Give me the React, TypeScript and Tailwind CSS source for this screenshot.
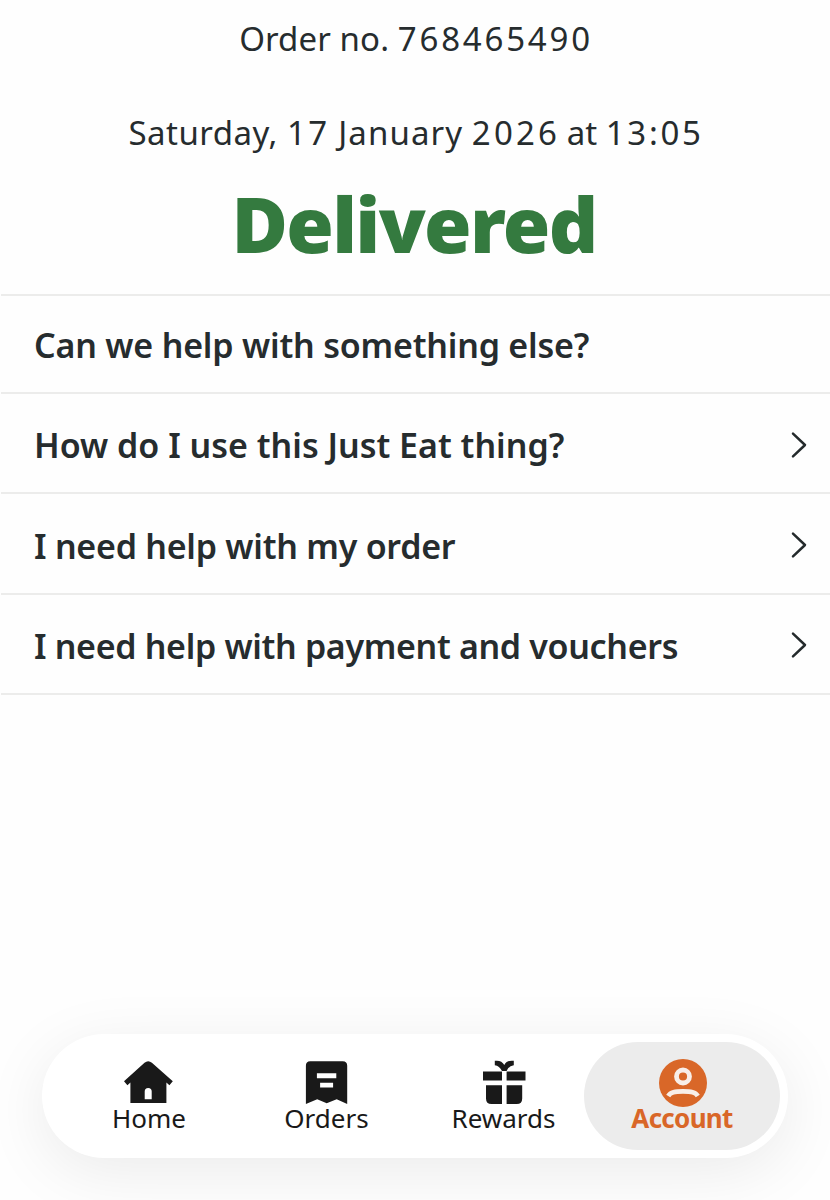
import type { ReactNode } from "react";

const helpTopics = [
  { title: "How do I use this Just Eat thing?", className: "" },
  { title: "I need help with my order", className: "tracking-[-0.25px]" },
  { title: "I need help with payment and vouchers", className: "tracking-[-0.33px]" },
];

function ChevronIcon() {
  return (
    <svg width="18" height="28" viewBox="0 0 18 28" fill="none">
      <path
        d="M3 2.7L15 14L3 25.3"
        stroke="#242a2c"
        strokeWidth="2.5"
        strokeLinecap="round"
        strokeLinejoin="round"
      />
    </svg>
  );
}

function HomeIcon() {
  return (
    <svg width="52" height="48" viewBox="0.8 0 52 48">
      <path
        fillRule="evenodd"
        d="M22.3 3.8Q26 0.6 29.7 3.8L50.6 22.3L47.2 26.2L44.2 23.6V44H8.2V23.6L5.2 26.2L1.8 22.3ZM22.5 40.2H29.5V32.5A3.5 3.5 0 0 0 22.5 32.5Z"
        fill="#191919"
      />
    </svg>
  );
}

function OrdersIcon() {
  return (
    <svg width="52" height="48" viewBox="0.3 0 52 48">
      <path
        fillRule="evenodd"
        d="M9.5 2.2H42Q46.5 2.2 46.5 6.7V45L36 40.2L26 44.2L16.5 40.2L5.2 45V6.7Q5.2 2.2 9.5 2.2ZM16.2 14.3V19.2H35.6V14.3ZM19.4 23.7V28.6H32.4V23.7Z"
        fill="#191919"
      />
    </svg>
  );
}

function RewardsIcon() {
  return (
    <svg width="52" height="48" viewBox="0 0 52 48" fill="#191919">
      <path d="M16.8 1.8Q23.5 0.8 26.3 6Q29 0.8 35.8 1.8V6.2Q31 6.6 28.6 12H24Q21.4 6.6 16.8 6.2Z" />
      <path d="M5 12.4H24V21.4H5ZM28.6 12.4H47.5V21.4H28.6Z" />
      <path d="M8 26.3H24V45H13.5Q8 45 8 39.5ZM28.6 26.3H44.2V39.5Q44.2 45 38.7 45H28.6Z" />
    </svg>
  );
}

function AccountIcon() {
  return (
    <svg width="52" height="48" viewBox="0 0 52 48" fill="none">
      <circle cx="26" cy="24" r="24" fill="#d96728" />
      <circle cx="26" cy="17.5" r="6.5" stroke="#f8eee8" strokeWidth="4.8" />
      <path
        d="M11.2 37C13.5 32.9 18 32.4 26 32.4C34 32.4 38.5 32.9 40.8 37"
        stroke="#f8eee8"
        strokeWidth="4.6"
      />
    </svg>
  );
}

type NavItemProps = {
  icon: ReactNode;
  label: string;
  active?: boolean;
  className?: string;
};

function NavItem({ icon, label, active, className }: NavItemProps) {
  return (
    <button
      className={`flex flex-col items-center h-[108px] pt-[17px] rounded-[54px] ${
        active
          ? "bg-[#ececec] text-[#d96728] font-bold tracking-[-0.7px]"
          : "text-[#191919]"
      } ${className ?? ""}`}
    >
      {icon}
      <span
        className={`-mt-[2px] text-[26px] leading-[26px] whitespace-nowrap ${
          active ? "mr-[2px]" : ""
        }`}
      >
        {label}
      </span>
    </button>
  );
}

export default function App() {
  return (
    <div className="h-[1200px] w-[830px] flex flex-col overflow-hidden bg-[#fefefe] text-[#262c2e] font-['Noto_Sans',sans-serif]">
      {/* Order status */}
      <header className="flex flex-col items-center h-[294px] pt-[15px] text-center whitespace-nowrap">
        <p className="pl-[2px] text-[33px] leading-[48px]">
          <span className="tracking-[0.1px]">Order no. </span>
          <span className="tracking-[2.8px]">768465490</span>
        </p>
        <p className="mt-[46px] pl-[2px] text-[33px] leading-[48px]">
          <span className="tracking-[0.5px]">Saturday, </span>
          <span className="tracking-[2.4px]">17</span>{" "}
          <span className="tracking-[1.1px]">January </span>
          <span className="-ml-px tracking-[3.2px]">2026</span>
          <span className="-ml-[2px]"> at </span>
          <span className="tracking-[2.7px]">13:05</span>
        </p>
        <h1 className="mt-[17px] mr-[2px] text-[77px] leading-[100px] tracking-[-1.7px] font-black text-[#347a3f]">
          Delivered
        </h1>
      </header>

      {/* Help topics */}
      <section className="ml-px border-t-2 border-[#ececeb] text-[34px] font-semibold whitespace-nowrap">
        <h2 className="flex items-center h-[98px] pt-[2px] pl-[33px] border-b-2 border-[#ececeb] tracking-[-0.2px]">
          Can we help with something else?
        </h2>
        {helpTopics.map((topic) => (
          <a
            key={topic.title}
            className="flex items-center justify-between h-[100.4px] pt-[3px] pl-[33px] pr-[22px] border-b-2 border-[#ececeb]"
          >
            <span className={`pt-[2px] ${topic.className}`}>{topic.title}</span>
            <ChevronIcon />
          </a>
        ))}
      </section>

      {/* Tab bar */}
      <nav className="mt-auto mb-[42px] ml-[42px] w-[746px] h-[124px] flex items-center justify-end pr-2 rounded-[62px] bg-white shadow-[0_14px_64px_rgba(0,0,0,0.08)]">
        <NavItem icon={<HomeIcon />} label="Home" className="w-[178px]" />
        <NavItem icon={<OrdersIcon />} label="Orders" className="w-[177px]" />
        <NavItem icon={<RewardsIcon />} label="Rewards" className="w-[177px] mr-[-8px]" />
        <NavItem icon={<AccountIcon />} label="Account" active className="w-[196px] pl-[2px]" />
      </nav>
    </div>
  );
}
